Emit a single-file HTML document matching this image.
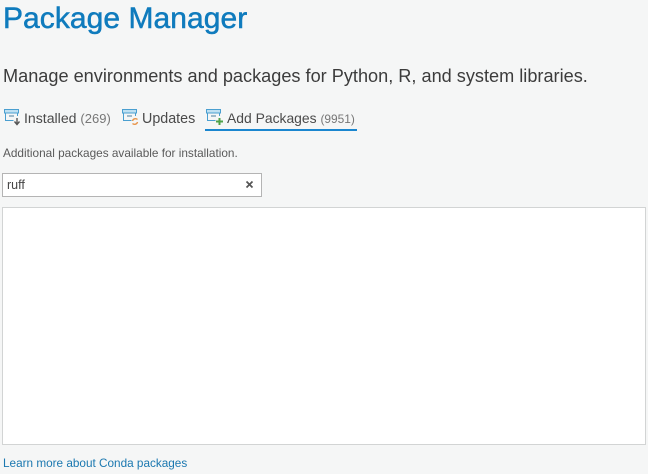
<!DOCTYPE html>
<html><head><meta charset="utf-8">
<style>
html,body{margin:0;padding:0}
body{width:648px;height:474px;background:#f5f6f6;position:relative;overflow:hidden;font-family:"Liberation Sans",sans-serif;filter:blur(.35px)}
.t{position:absolute;white-space:nowrap;line-height:1}
svg{position:absolute}
</style></head><body>
<div class="t" style="left:3px;top:4px;font-size:30px;color:#0f7bbd;-webkit-text-stroke:.5px #0f7bbd;letter-spacing:.05px">Package Manager</div>
<div class="t" style="left:3px;top:67px;font-size:18.15px;color:#3c3c3c">Manage environments and packages for Python, R, and system libraries.</div>

<svg style="left:4px;top:109px" width="18" height="18" viewBox="0 0 18 18">
<path d="M.5 .5h14v3.5h-14z" fill="#bfe0f2" stroke="#4a9fd0"/><path d="M1.5 4v7.5h8" fill="none" stroke="#4a9fd0"/><path d="M13.5 4v3" stroke="#4a9fd0"/><path d="M5 7h5" stroke="#4a7f9f"/>
<path d="M13 9v6M10.5 12.5l2.5 3 2.5-3" fill="none" stroke="#555" stroke-width="1.4"/>
</svg>
<div class="t" style="left:24px;top:111px;font-size:14.1px;color:#4a4a4a">Installed <span style="color:#777;font-size:13px">(269)</span></div>

<svg style="left:122px;top:109px" width="18" height="18" viewBox="0 0 18 18">
<path d="M.5 .5h14v3.5h-14z" fill="#bfe0f2" stroke="#4a9fd0"/><path d="M1.5 4v7.5h8" fill="none" stroke="#4a9fd0"/><path d="M13.5 4v3" stroke="#4a9fd0"/><path d="M5 7h5" stroke="#4a7f9f"/>
<path d="M10.5 12a3 3 0 0 1 5-1.5M15.5 13a3 3 0 0 1-5 1.5" fill="none" stroke="#e8944a" stroke-width="1.4"/>
</svg>
<div class="t" style="left:142px;top:112px;font-size:14.3px;color:#4a4a4a">Updates</div>

<svg style="left:206px;top:109px" width="18" height="18" viewBox="0 0 18 18">
<path d="M.5 .5h14v3.5h-14z" fill="#bfe0f2" stroke="#4a9fd0"/><path d="M1.5 4v7.5h8" fill="none" stroke="#4a9fd0"/><path d="M13.5 4v3" stroke="#4a9fd0"/><path d="M5 7h5" stroke="#4a7f9f"/>
<path d="M13.5 9v7M10 12.5h7" fill="none" stroke="#4fa24a" stroke-width="2"/>
</svg>
<div class="t" style="left:227px;top:112px;font-size:13.9px;color:#4a4a4a">Add Packages <span style="color:#777;font-size:11.9px">(9951)</span></div>
<div style="position:absolute;left:205px;top:129px;width:152px;height:2px;background:#1a86cf"></div>

<div class="t" style="left:3px;top:148px;font-size:11.8px;color:#5a5a5a">Additional packages available for installation.</div>

<div style="position:absolute;left:2px;top:173px;width:258px;height:22px;background:#fff;border:1px solid #b4b4b4"></div>
<div class="t" style="left:7px;top:179px;font-size:12.5px;color:#444">ruff</div>
<svg style="left:245px;top:180px" width="10" height="10" viewBox="0 0 10 10"><path d="M1.5 1.5l6 6M7.5 1.5l-6 6" stroke="#555" stroke-width="1.7"/></svg>

<div style="position:absolute;left:2px;top:207px;width:642px;height:236px;background:#fff;border:1px solid #d2d4d4"></div>

<div class="t" style="left:3px;top:458px;font-size:11.76px;color:#1b78b0">Learn more about Conda packages</div>
</body></html>
